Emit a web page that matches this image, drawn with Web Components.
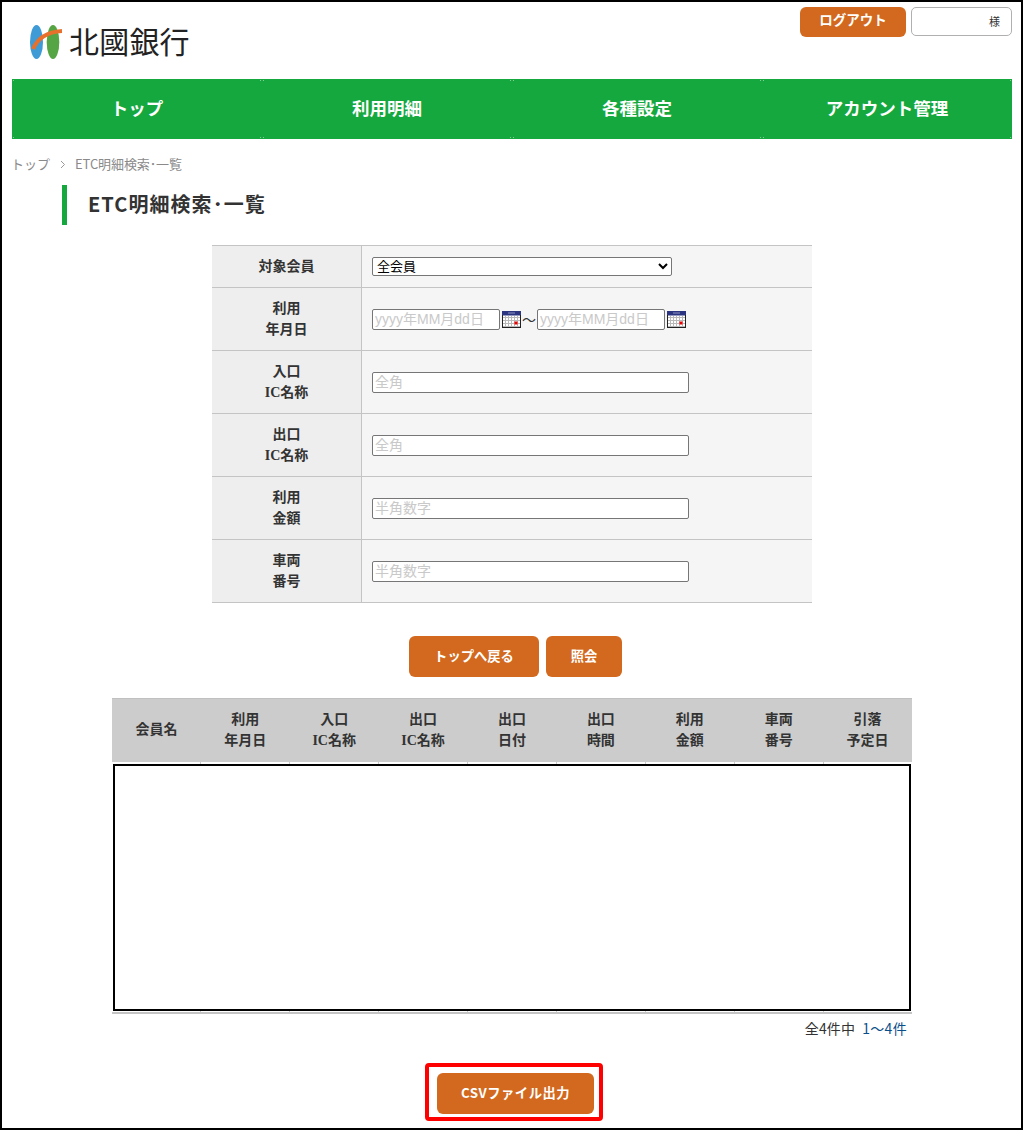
<!DOCTYPE html>
<html lang="ja"><head><meta charset="utf-8"><title>ETC明細検索・一覧</title>
<style>
html,body{margin:0;padding:0;background:#fff}
body{font-family:"Noto Sans CJK JP","Noto Sans",sans-serif;color:#333}
</style></head><body>
<x-app>
  <x-header></x-header>
  <x-nav></x-nav>
  <x-crumb></x-crumb>
  <x-title>ETC明細検索･一覧</x-title>
  <x-search></x-search>
  <x-actions></x-actions>
  <x-results></x-results>
  <x-pager></x-pager>
  <x-export></x-export>
</x-app>
<script>
const FONT='"Noto Sans CJK JP","Noto Sans",sans-serif';
const FIELD='"Liberation Sans","Noto Sans CJK JP",sans-serif';
const SERIF='"Liberation Serif","Noto Sans CJK JP",serif';
function def(name,html){
  customElements.define(name,class extends HTMLElement{
    constructor(){super();this.attachShadow({mode:'open'}).innerHTML=html;}
  });
}
const cal=`<svg width="19" height="17" viewBox="0 0 19 17" style="flex:none;display:block;margin-left:2px"><rect width="19" height="17" fill="#fff"/><path d="M3.5 5v11M6.5 5v11M9.5 5v11M12.5 5v11M15.5 5v11M1 6.5h17M1 9.5h17M1 12.5h17M1 15.5h17" stroke="#b9b9b9" fill="none"/><rect width="19" height="4.5" fill="#2b3580"/><rect x="6" y="1.5" width="7" height="1" fill="#8d93c4"/><rect x="12.5" y="10.5" width="3" height="3" fill="#e00"/><path d="M.5 4v13M18.5 4v13M0 16.5h19" stroke="#222" fill="none"/></svg>`;
def('x-app',`<style>:host{display:block;box-sizing:border-box;width:1023px;height:1130px;border:2px solid #000;padding:0 9px 0 10px;overflow:hidden;background:#fff}</style><slot></slot>`);
def('x-header',`<style>
:host{display:flex;justify-content:space-between;height:77px;box-sizing:border-box;padding-top:5px}
.logo{display:flex;align-items:flex-start;gap:7px;margin:18px 0 0 18px}
.logo span{font:400 30px/34px ${FONT};color:#222;letter-spacing:.2px;margin-top:-2px}
.r{display:flex;gap:5px;align-items:flex-start}
.out{box-sizing:border-box;width:106px;height:30px;background:#d2691e;border-radius:6px;color:#fff;font:700 13.5px/25px ${FONT};text-align:center}
.who{box-sizing:border-box;width:101px;height:29px;border:1px solid #b0b0b0;border-radius:5px;background:#fff;font:400 11px/27px ${FONT};color:#333;text-align:right;padding-right:11px}
</style>
<div class="logo"><svg width="32" height="34" viewBox="0 0 32 34"><ellipse cx="6.5" cy="17" rx="6.5" ry="17" fill="#3f9bd6"/><ellipse cx="23" cy="17" rx="6.3" ry="17" fill="#55a544"/><path d="M3 24C8 12 18 7 32 6" fill="none" stroke="#e8702a" stroke-width="4"/></svg><span>北國銀行</span></div>
<div class="r"><div class="out">ログアウト</div><div class="who">様</div></div>`);
const dot='linear-gradient(#7fcf96,#7fcf96)';
def('x-nav',`<style>
:host{display:grid;grid-template-columns:repeat(4,250px);height:60px;background:#15a83e;width:1000px}
div{text-align:center;color:#fff;font:700 17.5px/58px ${FONT};
background:${dot} 1px 1px/1px 1px no-repeat,${dot} calc(100% - 1px) 1px/1px 1px no-repeat,${dot} 1px 58px/1px 1px no-repeat,${dot} calc(100% - 1px) 58px/1px 1px no-repeat}
</style><div>トップ</div><div>利用明細</div><div>各種設定</div><div>アカウント管理</div>`);
def('x-crumb',`<style>
:host{display:flex;align-items:center;height:46px;box-sizing:border-box;padding-top:4px;color:#8a8a8a;font:400 13px/20px ${FONT}}
.t{margin-left:-1px;letter-spacing:0}
svg{margin:0 9px 0 10px}
.c{letter-spacing:-.1px}
</style><span class="t">トップ</span><svg width="6" height="9" viewBox="0 0 6 9"><path d="M1 1l3.5 3.5L1 8" fill="none" stroke="#999"/></svg><span class="c">ETC明細検索･一覧</span>`);
def('x-title',`<style>
:host{display:block;box-sizing:border-box;height:40px;margin-left:50px;border-left:5px solid #15a83e;padding-left:21px;font:700 20px/38px ${FONT};letter-spacing:1.05px;color:#333}
</style><slot></slot>`);
const ph=p=>`<input type="text" placeholder="${p}">`;
const row=(h,c,cls='')=>`<div class="row ${cls}"><div class="th">${h}</div><div class="td">${c}</div></div>`;
def('x-search',`<style>
:host{display:block;width:600px;margin:20px auto 0;border-top:1px solid #c4c4c4}
.row{display:grid;grid-template-columns:150px 450px;height:63px;box-sizing:border-box;border-bottom:1px solid #c4c4c4}
.row.a{height:42px}
.th{background:#eee;border-right:1px solid #c4c4c4;display:flex;align-items:center;justify-content:center;text-align:center;font:700 14px/21px ${SERIF};color:#333;padding-bottom:1px;box-sizing:border-box}
.td{background:#f5f5f5;display:flex;align-items:center;padding-left:10px;color:#333;font:400 14px ${FONT}}
input{box-sizing:border-box;width:317px;height:21px;margin:0;padding:0 2px;border:1px solid #767676;border-radius:2px;background:#fff;font:400 14px ${FIELD}}
input::placeholder{color:#c9c9c9;opacity:1}
select{box-sizing:border-box;width:300px;height:19px;margin:0;padding:0;border:1px solid #767676;border-radius:2px;background:#fff;color:#000;font:400 13px ${FIELD}}
.d{width:128px}
.rng{display:flex;align-items:center}
.w{width:16px;text-align:center;font-size:14px;line-height:21px}
</style>
${row('対象会員','<select><option>全会員</option></select>','a')}
${row('利用<br>年月日',`<div class="rng"><input class="d" placeholder="yyyy年MM月dd日">${cal}<span class="w">〜</span><input class="d" placeholder="yyyy年MM月dd日">${cal}</div>`)}
${row('入口<br>IC名称',ph('全角'))}
${row('出口<br>IC名称',ph('全角'))}
${row('利用<br>金額',ph('半角数字'))}
${row('車両<br>番号',ph('半角数字'))}`);
const btn=`.b{box-sizing:border-box;height:41px;background:#d2691e;border-radius:6px;color:#fff;font:700 13.3px/40px ${FONT};text-align:center}`;
def('x-actions',`<style>
:host{display:flex;justify-content:center;gap:7px;margin-top:33px;padding-left:7px}
${btn}.a{width:130px}.c{width:76px}
</style><div class="b a">トップへ戻る</div><div class="b c">照会</div>`);
const heads=['会員名','利用<br>年月日','入口<br>IC名称','出口<br>IC名称','出口<br>日付','出口<br>時間','利用<br>金額','車両<br>番号','引落<br>予定日'];
def('x-results',`<style>
:host{display:block;width:800px;margin:21px 0 0 100px}
.h{display:grid;grid-template-columns:repeat(9,1fr);height:64px;background:#ccc;border-top:1px solid #c0c0c0;box-sizing:border-box}
.h div{display:flex;align-items:center;justify-content:center;text-align:center;font:700 14px/21px ${SERIF};color:#333;padding-bottom:2px;box-sizing:border-box}
.bd{display:grid;grid-template-columns:88px repeat(8,89px);position:relative;height:252px;box-sizing:border-box;border-bottom:2px solid #c4c4c4}
.bd i{display:block;border-left:1px solid #ccc}
.bd i:first-of-type{border-left:0}
.mask{position:absolute;left:1px;right:1px;top:2px;bottom:1px;background:#fff;border:2px solid #000;box-sizing:border-box}
</style>
<div class="h">${heads.map(h=>`<div>${h}</div>`).join('')}</div>
<div class="bd">${'<i></i>'.repeat(9)}<div class="mask"></div></div>`);
def('x-pager',`<style>
:host{display:block;width:795px;margin-left:100px;height:59px;box-sizing:border-box;padding-top:4px;text-align:right;font:400 14px/20px ${FONT};letter-spacing:.1px;color:#333}
a{color:#0b4f8a;text-decoration:none;margin-left:4px;letter-spacing:.3px}
</style>全4件中 <a>1〜4件</a>`);
def('x-export',`<style>
:host{display:flex;justify-content:center;position:relative;width:157px;margin-left:425px}
${btn}.b{width:157px;letter-spacing:.5px}
.mark{position:absolute;left:-12px;top:-10px;width:178px;height:58px;box-sizing:border-box;border:4px solid #f00;border-radius:4px}
</style><div class="b">CSVファイル出力</div><div class="mark"></div>`);
</script>
</body></html>
